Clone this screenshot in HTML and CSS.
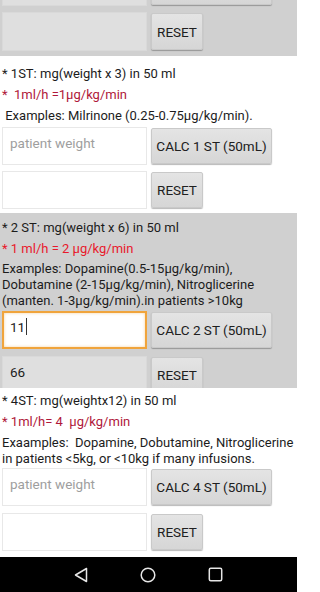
FILE: index.html
```html
<!DOCTYPE html>
<html>
<head>
<meta charset="utf-8">
<link rel="stylesheet" href="styles.css">
</head>
<body>
<div class="screen">
  <section class="sec gray sec0">
    <div class="row row-cut">
      <div class="field"></div>
      <div class="btn btn-calc"></div>
    </div>
    <div class="row row-gap0">
      <div class="field"></div>
      <button class="btn btn-reset">RESET</button>
    </div>
  </section>

  <section class="sec white sec1">
    <div class="line">* 1ST: mg(weight x 3) in 50 ml</div>
    <div class="line red-dark">*&nbsp; 1ml/h =1μg/kg/min</div>
    <div class="line">&nbsp;Examples: Milrinone (0.25-0.75μg/kg/min).</div>
    <div class="row row-first1">
      <div class="field"><span class="ph">patient weight</span></div>
      <button class="btn btn-calc">CALC 1 ST (50mL)</button>
    </div>
    <div class="row row-second">
      <div class="field"></div>
      <button class="btn btn-reset">RESET</button>
    </div>
  </section>

  <section class="sec gray sec2">
    <div class="line">* 2 ST: mg(weight x 6) in 50 ml</div>
    <div class="line red-bright">* 1 ml/h = 2 μg/kg/min</div>
    <div class="examples ex2">Examples: Dopamine(0.5-15μg/kg/min),<br>Dobutamine (2-15μg/kg/min), Nitroglicerine<br>(manten. 1-3μg/kg/min).in patients &gt;10kg</div>
    <div class="row row-first2">
      <div class="field focused"><span class="val">11</span><span class="caret"></span></div>
      <button class="btn btn-calc">CALC 2 ST (50mL)</button>
    </div>
    <div class="row row-second7 row-clip">
      <div class="field"><span class="val">66</span></div>
      <button class="btn btn-reset">RESET</button>
    </div>
  </section>

  <section class="sec white sec3">
    <div class="line">* 4ST: mg(weightx12) in 50 ml</div>
    <div class="line red-dark">* 1ml/h= 4&nbsp; μg/kg/min</div>
    <div class="examples ex3">Exaamples:&nbsp; Dopamine, Dobutamine, Nitroglicerine<br>in patients &lt;5kg, or &lt;10kg if many infusions.</div>
    <div class="row row-first3">
      <div class="field"><span class="ph">patient weight</span></div>
      <button class="btn btn-calc">CALC 4 ST (50mL)</button>
    </div>
    <div class="row row-second7">
      <div class="field"></div>
      <button class="btn btn-reset">RESET</button>
    </div>
  </section>

  <nav class="navbar">
    <svg class="nav-icon" width="14" height="16" viewBox="0 0 14 16">
      <polygon points="12.5,1.5 12.5,14.5 1.5,8" fill="none" stroke="#e6e6e6" stroke-width="1.5" stroke-linejoin="round"/>
    </svg>
    <svg class="nav-icon" width="16" height="16" viewBox="0 0 16 16">
      <circle cx="8" cy="8" r="6.8" fill="none" stroke="#e6e6e6" stroke-width="1.5"/>
    </svg>
    <svg class="nav-icon" width="15" height="15" viewBox="0 0 15 15">
      <rect x="1.3" y="1.3" width="12.4" height="12.4" rx="1.5" fill="none" stroke="#e6e6e6" stroke-width="1.5"/>
    </svg>
  </nav>
</div>
</body>
</html>
```

FILE: styles.css
```css
* { box-sizing: border-box; }
html, body { margin: 0; padding: 0; }
body {
  font-family: Roboto, "Noto Sans", sans-serif;
  font-size: 13px;
  color: #1c1c1c;
  background: #fff;
}
.screen {
  width: 297px;
  height: 592px;
  overflow: hidden;
  display: flex;
  flex-direction: column;
}
.sec { padding: 0 0 0 2px; flex: none; }
.gray { background: #d0d0d0; }
.white { background: #ffffff; }

.sec0 { height: 56px; overflow: hidden; }
.sec1 { height: 157px; padding-top: 6.5px; }
.sec2 { height: 175px; padding-top: 3.5px; overflow: hidden; }
.sec3 { height: 169px; padding-top: 1.5px; }

.line {
  line-height: 21px;
  height: 21px;
  white-space: nowrap;
}
.red-dark { color: #b0183a; }
.red-bright { color: #e8192c; }

.examples {
  line-height: 16px;
  white-space: nowrap;
}
.ex2 { margin-top: 2.5px; }
.ex3 { margin-top: 3.5px; }

.row {
  display: flex;
  align-items: stretch;
  gap: 4px;
  height: 38px;
}
.row-cut { margin-top: -32px; }
.row-gap0 { margin-top: 6px; height: 39px; }
.row-first1 { margin-top: 1.5px; }
.row-first2 { margin-top: 2px; }
.row-first3 { margin-top: 1px; }
.row-second { margin-top: 6px; }
.row-second7 { margin-top: 7px; }

.field {
  width: 145px;
  flex: none;
  background: #fff;
  border: 1px solid #e8e8e8;
  padding: 6px 0 0 7px;
  font-size: 13.5px;
  line-height: 18px;
  display: flex;
  align-items: flex-start;
}
.gray .field {
  background: #dfdfdf;
  border-color: #d9d9d9;
}
.gray .field.focused {
  background: #fff;
  border: 2px solid #f0a43c;
  box-shadow: inset 0 0 3px rgba(240,164,60,0.5);
  padding: 5px 0 0 6px;
}
.ph { color: #9e9e9e; }
.val { color: #1c1c1c; }
.caret {
  display: inline-block;
  width: 1px;
  height: 17px;
  background: #333;
  margin-left: 1px;
}

.btn {
  flex: none;
  margin: 1px 0;
  font-family: Roboto, "Noto Sans", sans-serif;
  font-size: 13.5px;
  color: #202020;
  background: linear-gradient(#e4e4e4, #d6d6d6);
  border: 1px solid #c9c9c9;
  border-radius: 2px;
  box-shadow: 0 1px 1px rgba(0,0,0,0.28);
  padding: 0;
  text-align: center;
}
.btn-calc { width: 121px; }
.btn-reset { width: 52px; }

.navbar {
  flex: none;
  height: 35px;
  background: #000;
  display: flex;
  align-items: center;
  justify-content: center;
  gap: 52px;
}
.nav-icon { display: block; }
```
